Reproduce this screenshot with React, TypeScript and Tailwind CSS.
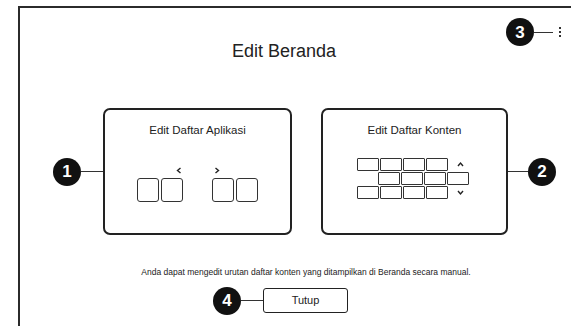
import React from 'react';

const Badge: React.FC<{ n: string }> = ({ n }) => (
    <div className="w-[28px] h-[28px] shrink-0 rounded-full bg-[#111] flex items-center justify-center text-white font-bold text-[17px] leading-none">
        {n}
    </div>
);

const Line: React.FC<{ w: string }> = ({ w }) => <div className={`${w} h-[1px] bg-[#333] shrink-0`} />;

const Chevron: React.FC<{ dir: 'left' | 'right' | 'up' | 'down' }> = ({ dir }) => {
    const pts = {
        left: '4.5,1 1.5,3.5 4.5,6',
        right: '1.5,1 4.5,3.5 1.5,6',
        up: '1,5 3.5,2 6,5',
        down: '1,2 3.5,5 6,2',
    }[dir];
    const horizontal = dir === 'left' || dir === 'right';
    return (
        <svg width={horizontal ? 6 : 7} height={7} viewBox={horizontal ? '0 0 6 7' : '0 0 7 7'} className="block">
            <polyline points={pts} fill="none" stroke="#222" strokeWidth="1.4" />
        </svg>
    );
};

const AppBox = () => <div className="w-[22px] h-[24px] rounded-[3px] border border-[#333]" />;
const ContentBox = () => <div className="w-[22px] h-[13px] rounded-[1px] border border-[#333]" />;

export default function App() {
    return (
        <div className="w-[571px] h-[326px] overflow-hidden bg-white text-[#222] font-['Liberation_Sans',Arial,sans-serif]">
            <div className="relative ml-[18px] mt-[6px] w-[600px] h-[340px] border-l-2 border-t-2 border-[#2b2b2b]">
                {/* callout 3 + menu */}
                <div className="absolute left-[486px] top-[10px] flex items-center">
                    <Badge n="3" />
                    <Line w="w-[19px]" />
                    <div className="ml-[6px] flex flex-col gap-[2px]">
                        <div className="w-[2px] h-[2px] bg-[#333]" />
                        <div className="w-[2px] h-[2px] bg-[#333]" />
                        <div className="w-[2px] h-[2px] bg-[#333]" />
                    </div>
                </div>

                <div className="w-[572px]">
                    <h1 className="mt-[34px] pl-[212px] text-[18px] leading-[18px]">Edit Beranda</h1>

                    <div className="mt-[48px] ml-[33px] flex items-center">
                        <Badge n="1" />
                        <Line w="w-[22px]" />
                        <div className="w-[189px] h-[127px] rounded-[7px] border-2 border-[#222] pt-[14px]">
                            <p className="text-center text-[11.5px] leading-[12px]">Edit Daftar Aplikasi</p>
                            <div className="mt-[31px] flex justify-center gap-[29px]">
                                <div className="flex flex-col">
                                    <div className="flex justify-end pr-[1px] mb-[4px]">
                                        <Chevron dir="left" />
                                    </div>
                                    <div className="flex gap-[2px]">
                                        <AppBox />
                                        <AppBox />
                                    </div>
                                </div>
                                <div className="flex flex-col">
                                    <div className="flex pl-[2px] mb-[4px]">
                                        <Chevron dir="right" />
                                    </div>
                                    <div className="flex gap-[2px]">
                                        <AppBox />
                                        <AppBox />
                                    </div>
                                </div>
                            </div>
                        </div>

                        <div className="w-[29px] shrink-0" />

                        <div className="w-[187px] h-[127px] rounded-[7px] border-2 border-[#222] pt-[14px]">
                            <p className="text-center text-[11.5px] leading-[12px]">Edit Daftar Konten</p>
                            <div className="mt-[22px] ml-[34px] flex flex-col gap-[1px]">
                                <div className="flex items-center gap-[1px]">
                                    <ContentBox />
                                    <ContentBox />
                                    <ContentBox />
                                    <ContentBox />
                                    <div className="ml-[8px]">
                                        <Chevron dir="up" />
                                    </div>
                                </div>
                                <div className="flex gap-[1px] ml-[21px]">
                                    <ContentBox />
                                    <ContentBox />
                                    <ContentBox />
                                    <ContentBox />
                                </div>
                                <div className="flex items-center gap-[1px]">
                                    <ContentBox />
                                    <ContentBox />
                                    <ContentBox />
                                    <ContentBox />
                                    <div className="ml-[8px]">
                                        <Chevron dir="down" />
                                    </div>
                                </div>
                            </div>
                        </div>
                        <Line w="w-[20px]" />
                        <Badge n="2" />
                    </div>

                    <p className="mt-[33px] text-center text-[8.5px] leading-[8.5px]">
                        Anda dapat mengedit urutan daftar konten yang ditampilkan di Beranda secara manual.
                    </p>

                    <div className="mt-[10px] ml-[193px] flex items-center">
                        <Badge n="4" />
                        <Line w="w-[22px]" />
                        <button className="w-[85px] h-[25px] rounded-[3px] border border-[#222] text-[11px] leading-none bg-white">
                            Tutup
                        </button>
                    </div>
                </div>
            </div>
        </div>
    );
}
